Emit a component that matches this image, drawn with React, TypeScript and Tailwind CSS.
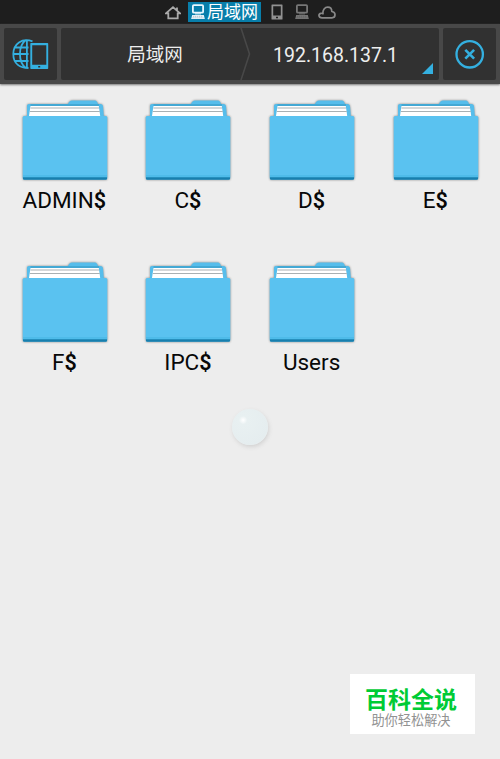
import React from 'react';

const latin = "font-['Roboto','Noto_Sans_CJK_SC',sans-serif]";
const cjk = "font-['Noto_Sans_CJK_SC',sans-serif]";

function HomeIcon() {
  return (
    <svg width="16" height="15" viewBox="0 0 16 15" fill="none" stroke="#aaaaaa" strokeWidth="1.8">
      <path d="M1 8.4h2.3v4.9h9.4V8.4H15L8 2.2ZM12 5.4V2.6" />
    </svg>
  );
}

function ComputerIcon({ color }: { color: string }) {
  return (
    <svg width="14" height="16" viewBox="0 0 14 16" fill="none" stroke={color}>
      <rect x="1.9" y="1.1" width="10.2" height="7.6" rx="1" strokeWidth="1.8" />
      <path d="M4 9.9h6" strokeWidth="1" />
      <path d="M1.2 11h11.6L13.8 15H.2Z" fill={color} stroke="none" />
      <path d="M2 12.3h10M1.5 13.8h11" stroke="#333" strokeOpacity=".45" strokeWidth=".6" strokeDasharray="1.3 .7" />
    </svg>
  );
}

function PhoneIcon() {
  return (
    <svg width="12" height="16" viewBox="0 0 12 16">
      <path fill="#919191" fillRule="evenodd" d="M1 .5h10q.5 0 .5.5v14q0 .5-.5.5H1q-.5 0-.5-.5V1Q.5.5 1 .5ZM2.2 2.2v9.3h7.6V2.2ZM5 12.8v1.5h2v-1.5Z" />
    </svg>
  );
}

function CloudIcon() {
  return (
    <svg width="18" height="13" viewBox="0 0 18 13" fill="none" stroke="#898989" strokeWidth="1.7" strokeLinejoin="round">
      <path d="M4 11.8C.2 11.8.1 7.7 3 7.3c.8-.1 1.5.1 2 .4C4.4 3.8 7 1.2 9.7 1.2c2.5 0 4.1 1.8 4.1 4.3 1.9.3 3.2 1.6 3.2 3.3 0 1.8-1.3 3-3 3Z" />
    </svg>
  );
}

function GlobePhoneIcon() {
  return (
    <svg width="37" height="31" viewBox="0 0 37 31" fill="none" stroke="#34b0e0">
      <path strokeWidth="1.8" d="M20.5 2.3C10-1.5 1.3 5 1.3 15s7 14 15.2 14M14.9 1v28.5M13.8 1C6 7 6 23 13.8 29M1 15h15.5M3 8.5h13.5M3 22h13.5" />
      <path fill="#34b0e0" stroke="none" fillRule="evenodd" d="M19 4h16.5q.7 0 .7.7v24.6q0 .7-.7.7H19q-.7 0-.7-.7V4.7q0-.7.7-.7Zm1.2 2.2v19.6h14.1V6.2Zm6 20.9v1.5h2v-1.5Z" />
    </svg>
  );
}

function FolderIcon() {
  return (
    <svg width="86" height="82" viewBox="0 0 86 82" className="drop-shadow-[0_0_1px_#888]">
      <path d="M5 19V6.5Q5 5 7 5h39q1.2-3.5 4-3.5h23q2 0 3 3.5h2.5q2 0 2.5 2l1 12Z" fill="#56bdeb" />
      <path d="M8.5 6h68.5" stroke="#3294bd" />
      <path d="M8.5 7h68.3l1.7 12H6.7Z" fill="#fff" />
      <path d="M8.5 9h68.6M7.8 12.5h70" stroke="#a9b0b3" strokeWidth="1" />
      <rect x=".7" y="17" width="84.6" height="63.5" rx="1.5" fill="#5ac2f0" />
      <path d="M1 77h84" stroke="#43b5e3" strokeWidth="1" />
      <path d="M1 78.2h84v1.2q0 1.3-1.3 1.3H2.3Q1 80.7 1 79.4Z" fill="#177fae" />
    </svg>
  );
}

const folders = ['ADMIN', 'C', 'D', 'E', 'F', 'IPC', 'Users'];

export default function App() {
  return (
    <main className={`flex h-[759px] w-[500px] flex-col overflow-hidden bg-[#ededed] ${latin}`}>
      <div className="flex h-6 shrink-0 items-center bg-[#1e1e1e] pl-[165px]">
        <HomeIcon />
        <div className="ml-[7px] mt-[2px] flex h-[20px] w-[73px] items-center self-start bg-[#087eaa] pl-[3px] text-white">
          <ComputerIcon color="#e8f7ff" />
          <span className={`-mt-[2px] ml-[2px] text-[17px] leading-[18px] ${cjk}`}>局域网</span>
        </div>
        <div className="ml-[10px]"><PhoneIcon /></div>
        <div className="ml-[12px]"><ComputerIcon color="#777777" /></div>
        <div className="ml-[9px]"><CloudIcon /></div>
      </div>
      <nav className="flex h-[60px] shrink-0 gap-1 bg-[#484848] p-1 text-[#eeeeee] shadow-[0_1px_2px_#777]">
        <button className="flex w-[53px] items-center justify-center rounded-[2px] bg-[#313131]">
          <GlobePhoneIcon />
        </button>
        <div className="relative flex w-[378px] items-center rounded-[2px] bg-[#313131]">
          <span className={`w-[179px] pl-[9px] text-center text-[18.5px] ${cjk}`}>局域网</span>
          <svg width="11" height="52" viewBox="0 0 11 52" fill="none" stroke="#484848" strokeWidth="1.6">
            <path d="M1 0 9.5 26 1 52" />
          </svg>
          <span className="mt-[3px] ml-[22px] text-[19.5px]">192.168.137.1</span>
          <svg className="absolute right-[6px] bottom-[6px]" width="11" height="11">
            <path d="M11 0v11H0Z" fill="#34b0e0" />
          </svg>
        </div>
        <button className="flex w-[53px] items-center justify-center rounded-[2px] bg-[#313131]">
          <svg width="30" height="30" viewBox="0 0 30 30" fill="none" stroke="#34b0e0">
            <circle cx="14.7" cy="15.3" r="13.2" strokeWidth="2.3" />
            <path d="m10.3 10.9 8.8 8.8m0-8.8-8.8 8.8" strokeWidth="2.6" />
          </svg>
        </button>
      </nav>
      <section className="ml-[3px] grid h-[324px] w-[494.5px] shrink-0 grid-cols-4 grid-rows-2">
        {folders.map((name) => (
          <div key={name} className="flex flex-col items-center pt-[15px]">
            <FolderIcon />
            <div className="mt-[4px] pr-[1px] text-[22.5px] leading-[30px] text-[#080808]">
              {name}
              {name !== 'Users' && <span className="text-[21.5px] font-semibold">$</span>}
            </div>
          </div>
        ))}
      </section>
      <div className="mt-[1px] ml-[232px] h-[36px] w-[36px] shrink-0 rounded-full bg-[radial-gradient(ellipse_at_31%_31%,#ffffff_0,#e8f0f1_12%,#e5edef_75%,#edf3f3_100%)] shadow-[1px_2px_4px_#d2d2d2]" />
      <aside className={`mt-auto mr-[25px] mb-[25px] flex h-[60px] w-[125px] shrink-0 flex-col items-center self-end bg-white pt-[10px] pr-[3px] ${cjk}`}>
        <div className="text-[23px] leading-[28px] font-bold text-[#00cb35]">百科全说</div>
        <div className="text-[13.2px] leading-[16px] text-[#929292]">助你轻松解决</div>
      </aside>
    </main>
  );
}
